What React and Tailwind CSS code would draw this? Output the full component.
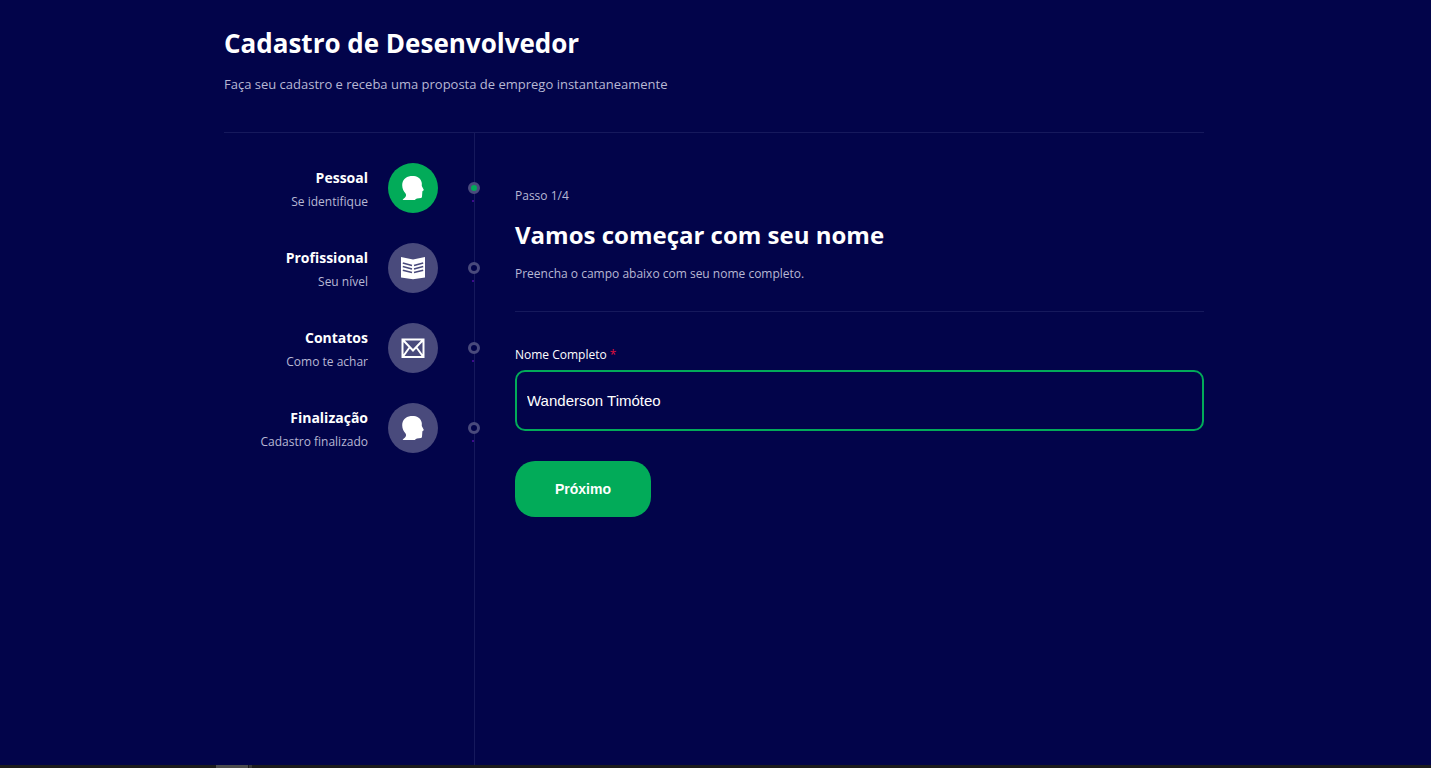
import React, { useState } from 'react';

function HeadIcon() {
  return (
    <svg viewBox="0 0 24 24" className="size-6" fill="#fff" aria-hidden="true">
      <path d="M1.600 24H13.800Q15 22.600 16 22.500L20 21.900Q21 21.600 21 20.500L21.300 16.400 21.400 15.200 22.700 14.200Q22.900 13.800 22.500 13.200L20.800 10V7C20.300 2.800 16.600-.1 11.300-.1 5.200-.1 1.200 3.800 1.200 9.200 1.200 13 2.800 15.200 4.400 17.300 5.400 18.800 5.200 20 4.200 21.200 3.400 22.200 2.200 22.800 1.600 24Z" />
    </svg>
  );
}

function BookIcon() {
  return (
    <svg viewBox="0 0 24 24" className="size-6" aria-hidden="true">
      <path fill="#fff" d="M0 1l12 2.500L24 1v20.500L12 23.200 0 21.500Z" />
      <path stroke="#494a7c" strokeWidth="1.500" fill="none" d="M1.800 7l9.200 2.500M1.800 10.500l9.200 2.500M1.800 14.200l9.200 2.300M22.200 7L13 9.500M22.200 10.500L13 13M22.200 14.200L13 16.500" />
    </svg>
  );
}

function MailIcon() {
  return (
    <svg viewBox="0 0 24 24" className="size-6" fill="none" stroke="#fff" strokeWidth="2" aria-hidden="true">
      <path d="M1.500 3.500h21v17.500h-21ZM2 4L12 14.500 22 4M2 20.500l6.500-9M22 20.500l-6.500-9" />
    </svg>
  );
}

const steps = [
  { title: 'Pessoal', text: 'Se identifique', Icon: HeadIcon, active: true },
  { title: 'Profissional', text: 'Seu nível', Icon: BookIcon },
  { title: 'Contatos', text: 'Como te achar', Icon: MailIcon },
  { title: 'Finalização', text: 'Cadastro finalizado', Icon: HeadIcon },
];

function Step({ title, text, Icon, active }) {
  return (
    <li>
      <a href="#" className="relative flex h-[50px] items-center gap-5 pr-9">
        <span className="flex-1 pt-1 text-right">
          <span className="block text-sm leading-6 font-bold text-white">{title}</span>
          <span className="block text-xs leading-6 text-[#b8b8d4]">{text}</span>
        </span>
        <span className={`flex size-[50px] items-center justify-center rounded-full ${active ? 'bg-[#02ab59]' : 'bg-[#494a7c]'}`}>
          <Icon />
        </span>
        <span className={`absolute top-[19px] -right-1.5 size-3 rounded-full border-3 border-[#494a7c] ${active ? 'bg-[#02ab59]' : 'bg-[#02044a]'}`} />
        <span className="absolute top-[37px] right-0 size-0.5 bg-[#3c0a8c]" />
      </a>
    </li>
  );
}

export default function App() {
  const [name, setName] = useState('Wanderson Timóteo');
  return (
    <div className="flex min-h-screen flex-col bg-[#02044a] font-['Open_Sans','Noto_Sans',sans-serif] text-white">
      <div className="flex flex-1 justify-center pr-[3px]">
        <div className="flex w-full max-w-[980px] flex-col">
          <header className="border-b border-[#16195c] pt-[23px] pb-9">
            <h1 className="text-[26px] leading-10 font-bold">Cadastro de Desenvolvedor</h1>
            <p className="mt-[9px] text-[13px] leading-6 text-[#b8b8d4]">Faça seu cadastro e receba uma proposta de emprego instantaneamente</p>
          </header>
          <div className="flex flex-1">
            <nav className="w-[251px] shrink-0 border-r border-[#16195c] pt-[30px]">
              <ul className="flex flex-col gap-[30px]">
                {steps.map((s) => <Step key={s.title} {...s} />)}
              </ul>
            </nav>
            <main className="flex-1 pt-[51px] pl-10">
              <p className="text-xs leading-6 text-[#b8b8d4]">Passo 1/4</p>
              <h2 className="mt-[7px] text-2xl leading-10 font-bold">Vamos começar com seu nome</h2>
              <p className="mt-[7px] text-xs leading-6 text-[#b8b8d4]">Preencha o campo abaixo com seu nome completo.</p>
              <hr className="mt-[25px] border-[#16195c]" />
              <form className="mt-[33px]" onSubmit={(e) => e.preventDefault()}>
                <label htmlFor="name" className="block text-xs leading-5 font-medium">
                  Nome Completo <span className="text-[#e0103c]">*</span>
                </label>
                <input
                  id="name"
                  type="text"
                  required
                  value={name}
                  onChange={(e) => setName(e.target.value)}
                  className="mt-[5px] block h-[61px] w-full rounded-[10px] border-2 border-[#02ab59] bg-transparent px-2.5 font-['Liberation_Sans',sans-serif] text-[15px] outline-none"
                />
                <button type="submit" className="mt-[30px] h-14 rounded-[20px] bg-[#02ab59] px-10 font-['Liberation_Sans',sans-serif] text-sm font-bold">
                  Próximo
                </button>
              </form>
            </main>
          </div>
        </div>
      </div>
      <div className="flex h-[3px] bg-[#1c1c1c] pl-[216px]">
        <span className="w-8 bg-[#4c4c4c]" />
        <span className="ml-px w-[3px] bg-[#363636]" />
      </div>
    </div>
  );
}
